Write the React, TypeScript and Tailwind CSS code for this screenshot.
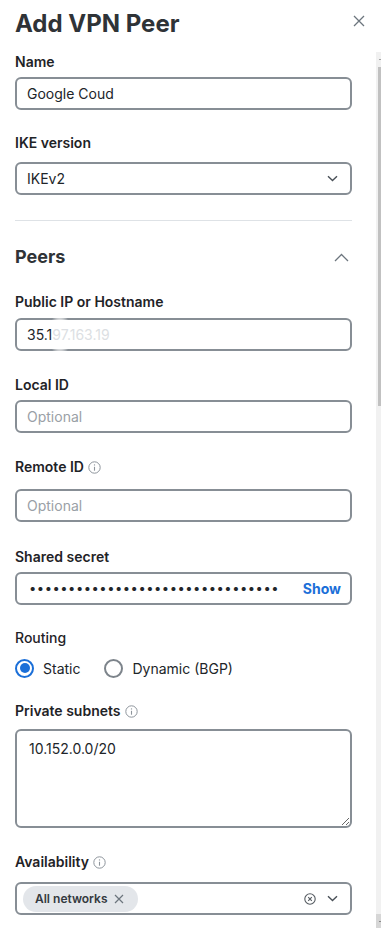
import { ReactNode } from "react";

const BORDER = "border-2 border-[#878e95] rounded-[6px]";

function Chevron({ up = false }: { up?: boolean }) {
  if (up) {
    return (
      <svg width="15" height="9" viewBox="0 0 15 9" fill="none">
        <path d="M1 8L7.5 1.5 14 8" stroke="#6c757d" strokeWidth="1.3" />
      </svg>
    );
  }
  return (
    <svg width="11" height="7" viewBox="0 0 11 7" fill="none">
      <path d="M1 1.2l4.5 4.3L10 1.2" stroke="#495057" strokeWidth="1.4" />
    </svg>
  );
}

function InfoIcon() {
  return (
    <svg width="13" height="13" viewBox="0 0 13 13" fill="none" className="ml-[4px]">
      <circle cx="6.5" cy="6.5" r="5.7" stroke="#8d949b" strokeWidth="1" />
      <path d="M6.5 5.8v3.9" stroke="#8d949b" strokeWidth="1.1" />
      <circle cx="6.5" cy="3.9" r="0.7" fill="#8d949b" />
    </svg>
  );
}

function Label({ children, info, className = "" }: { children: ReactNode; info?: boolean; className?: string }) {
  return (
    <div className={`flex items-center h-[20px] text-[14px] leading-[20px] font-semibold text-[#1f2327] ${className}`}>
      {children}
      {info && <InfoIcon />}
    </div>
  );
}

function TextBox({ children, className = "" }: { children: ReactNode; className?: string }) {
  return (
    <div className={`${BORDER} flex items-center h-[33px] px-[10px] text-[14px] ${className}`}>
      {children}
    </div>
  );
}

function Radio({ checked, label }: { checked?: boolean; label: string }) {
  return (
    <div className="flex items-center">
      {checked ? (
        <div className="flex h-[19px] w-[19px] items-center justify-center rounded-full border-2 border-[#1b6fd8]">
          <div className="h-[10px] w-[10px] rounded-full bg-[#1b6fd8]" />
        </div>
      ) : (
        <div className="h-[19px] w-[19px] rounded-full border-2 border-[#7d848b]" />
      )}
      <span className="ml-[9px] text-[14px] text-[#212529]">{label}</span>
    </div>
  );
}

function Scrollbar() {
  return (
    <div className="flex h-[876px] w-[5px] flex-col bg-[#f1f1f1]">
      <div className="flex h-[15px] items-center justify-end">
        <div className="h-[1px] w-[2px] bg-[#a3a3a3]" />
      </div>
      <div className="ml-[2px] h-[339px] w-[3px] bg-[#c1c1c1]" />
      <div className="flex-1" />
      <div className="flex h-[14px] items-center justify-end bg-[#d6d6d6]">
        <div className="h-[1px] w-[2px] bg-[#8a8a8a]" />
      </div>
    </div>
  );
}

export default function App() {
  const dots = "•".repeat(32);

  return (
    <div className="h-[928px] w-[381px] overflow-hidden bg-white font-['Inter',sans-serif]">
      <header className="flex h-[52px] items-start justify-between pl-[15px] pr-[16px]">
        <h1 className="mt-[8px] text-[24px] font-bold leading-[32px] text-[#2f3337]">Add VPN Peer</h1>
        <button className="mt-[15px]">
          <svg width="12" height="12" viewBox="0 0 12 12" fill="none">
            <path d="M1 1l10 10M11 1L1 11" stroke="#6c757d" strokeWidth="1.3" />
          </svg>
        </button>
      </header>

      <div className="flex">
        <div className="w-[376px] pl-[15px] pr-[24px]">
          <Label>Name</Label>
          <TextBox className="mt-[5px] text-[#212529]">Google Coud</TextBox>

          <Label className="mt-[23px]">IKE version</Label>
          <TextBox className="mt-[9px] justify-between pr-[12px] text-[#212529]">
            <span>IKEv2</span>
            <Chevron />
          </TextBox>

          <div className="mt-[25px] h-px bg-[#dee2e6]" />

          <div className="mt-[24px] flex h-[24px] items-center justify-between pr-[3px]">
            <h2 className="text-[18px] font-bold leading-[24px] text-[#2f3337]">Peers</h2>
            <Chevron up />
          </div>

          <Label className="mt-[23px]">Public IP or Hostname</Label>
          <div className="relative mt-[6px]">
            <TextBox className="text-[#212529]">
              <span className="relative z-10">35.1</span>
              <span className="relative z-10 text-[#dcdfe3]">97.163.19</span>
            </TextBox>
            <div className="absolute left-[34px] top-[-6px] h-[45px] w-[22px] bg-[radial-gradient(closest-side,white_50%,transparent)]" />
          </div>

          <Label className="mt-[24px]">Local ID</Label>
          <TextBox className="mt-[5px] text-[#9aa0a6]">Optional</TextBox>

          <Label info className="mt-[24px]">Remote ID</Label>
          <TextBox className="mt-[12px] text-[#9aa0a6]">Optional</TextBox>

          <Label className="mt-[25px]">Shared secret</Label>
          <TextBox className="mt-[5px] justify-between pl-[12px] pr-[9px]">
            <span className="text-[13px] tracking-[0.5px] text-[#212529]">{dots}</span>
            <span className="font-bold text-[#1b6fd8]">Show</span>
          </TextBox>

          <div className="mt-[23px] h-[20px] text-[14px] font-medium leading-[20px] text-[#1f2327]">Routing</div>
          <div className="mt-[10px] flex h-[20px] items-center gap-[24px]">
            <Radio checked label="Static" />
            <Radio label="Dynamic (BGP)" />
          </div>

          <Label info className="mt-[23px]">Private subnets</Label>
          <textarea
            readOnly
            defaultValue="10.152.0.0/20"
            className={`${BORDER} mt-[8px] block h-[99px] w-full px-[12px] py-[8px] text-[14px] leading-[20px] text-[#212529] outline-none`}
          />

          <Label info className="mt-[24px]">Availability</Label>
          <div className={`${BORDER} mt-[10px] flex h-[33px] items-center justify-between pl-[6px] pr-[12px]`}>
            <div className="flex h-[26px] items-center rounded-full bg-[#e3e6ea] pl-[12px] pr-[14px]">
              <span className="text-[12px] font-semibold text-[#343a40]">All networks</span>
              <svg width="10" height="10" viewBox="0 0 10 10" fill="none" className="ml-[6px]">
                <path d="M1 1l8 8M9 1L1 9" stroke="#6c757d" strokeWidth="1.2" />
              </svg>
            </div>
            <div className="flex items-center gap-[11px]">
              <svg width="12" height="12" viewBox="0 0 12 12" fill="none">
                <circle cx="6" cy="6" r="5.2" stroke="#555b61" strokeWidth="1.1" />
                <path d="M4.2 4.2l3.6 3.6M7.8 4.2L4.2 7.8" stroke="#555b61" strokeWidth="1.1" />
              </svg>
              <Chevron />
            </div>
          </div>
        </div>
        <Scrollbar />
      </div>
    </div>
  );
}
